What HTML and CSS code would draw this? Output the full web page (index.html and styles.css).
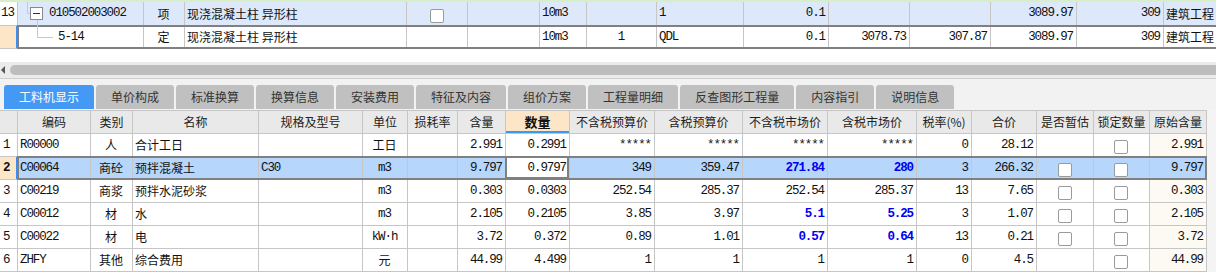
FILE: index.html
```html
<!DOCTYPE html>
<html lang="zh">
<head>
<meta charset="utf-8">
<title>工料机显示</title>
<link rel="stylesheet" href="styles.css">
</head>
<body>
<div class="top">
  <svg class="tree" width="60" height="48" viewBox="0 0 60 48">
    <path d="M27.5 0 V13.5 H30" fill="none" stroke="#f5c26e" stroke-width="1"/>
    <path d="M37.5 20 V37.5 H53" fill="none" stroke="#f5c26e" stroke-width="1"/>
    <rect x="30.5" y="7.5" width="12" height="12" fill="#fff" stroke="#8a8a8a" stroke-width="1"/>
    <path d="M33 13.5 H40" stroke="#333" stroke-width="1"/>
  </svg>
  <div class="tgrid" role="grid">
    <div class="row parent" role="row">
      <div class="cell rn plain n">13</div>
      <div class="cell n code1">010502003002</div>
      <div class="cell c">项</div>
      <div class="cell">现浇混凝土柱 异形柱</div>
      <div class="cell c"><span class="cb"></span></div>
      <div class="cell"></div>
      <div class="cell n">10m3</div>
      <div class="cell"></div>
      <div class="cell n">1</div>
      <div class="cell n r">0.1</div>
      <div class="cell"></div>
      <div class="cell"></div>
      <div class="cell n r">3089.97</div>
      <div class="cell n r">309</div>
      <div class="cell last">建筑工程</div>
    </div>
    <div class="row sel" role="row">
      <div class="cell rn cur"></div>
      <div class="cell n code2">5-14</div>
      <div class="cell c">定</div>
      <div class="cell">现浇混凝土柱 异形柱</div>
      <div class="cell"></div>
      <div class="cell"></div>
      <div class="cell n">10m3</div>
      <div class="cell n c">1</div>
      <div class="cell n">QDL</div>
      <div class="cell n r">0.1</div>
      <div class="cell n r">3078.73</div>
      <div class="cell n r">307.87</div>
      <div class="cell n r">3089.97</div>
      <div class="cell n r">309</div>
      <div class="cell last">建筑工程</div>
    </div>
  </div>
</div>

<div class="hscroll">
  <span class="arrow"></span>
  <span class="thumb"></span>
</div>

<div class="tabs">
  <span class="tab active">工料机显示</span>
  <span class="tab">单价构成</span>
  <span class="tab">标准换算</span>
  <span class="tab">换算信息</span>
  <span class="tab">安装费用</span>
  <span class="tab">特征及内容</span>
  <span class="tab">组价方案</span>
  <span class="tab">工程量明细</span>
  <span class="tab">反查图形工程量</span>
  <span class="tab">内容指引</span>
  <span class="tab">说明信息</span>
</div>

<div class="lower">
  <div class="lgrid" role="grid">
    <div class="row head" role="row">
      <div class="cell"></div><div class="cell">编码</div><div class="cell">类别</div><div class="cell">名称</div><div class="cell">规格及型号</div><div class="cell">单位</div><div class="cell">损耗率</div><div class="cell">含量</div><div class="cell hl">数量</div><div class="cell">不含税预算价</div><div class="cell">含税预算价</div><div class="cell">不含税市场价</div><div class="cell">含税市场价</div><div class="cell">税率(%)</div><div class="cell">合价</div><div class="cell">是否暂估</div><div class="cell">锁定数量</div><div class="cell">原始含量</div>
    </div>
    <div class="row" role="row">
      <div class="cell rn n">1</div><div class="cell n">R00000</div><div class="cell c">人</div><div class="cell">合计工日</div><div class="cell"></div><div class="cell c">工日</div><div class="cell"></div>
      <div class="cell n r">2.991</div><div class="cell n r">0.2991</div><div class="cell n r">*****</div><div class="cell n r">*****</div><div class="cell n r">*****</div><div class="cell n r">*****</div><div class="cell n r">0</div><div class="cell n r">28.12</div>
      <div class="cell"></div><div class="cell c"><span class="cb"></span></div><div class="cell n r orig">2.991</div>
    </div>
    <div class="row sel" role="row">
      <div class="cell rn n cur">2</div><div class="cell n">C00064</div><div class="cell c">商砼</div><div class="cell">预拌混凝土</div><div class="cell n">C30</div><div class="cell n c">m3</div><div class="cell"></div>
      <div class="cell n r">9.797</div><div class="cell n r edit">0.9797</div><div class="cell n r">349</div><div class="cell n r">359.47</div><div class="cell n r blue">271.84</div><div class="cell n r blue">280</div><div class="cell n r">3</div><div class="cell n r">266.32</div>
      <div class="cell c"><span class="cb"></span></div><div class="cell c"><span class="cb"></span></div><div class="cell n r orig">9.797</div>
    </div>
    <div class="row" role="row">
      <div class="cell rn n">3</div><div class="cell n">C00219</div><div class="cell c">商浆</div><div class="cell">预拌水泥砂浆</div><div class="cell"></div><div class="cell n c">m3</div><div class="cell"></div>
      <div class="cell n r">0.303</div><div class="cell n r">0.0303</div><div class="cell n r">252.54</div><div class="cell n r">285.37</div><div class="cell n r">252.54</div><div class="cell n r">285.37</div><div class="cell n r">13</div><div class="cell n r">7.65</div>
      <div class="cell c"><span class="cb"></span></div><div class="cell c"><span class="cb"></span></div><div class="cell n r orig">0.303</div>
    </div>
    <div class="row" role="row">
      <div class="cell rn n">4</div><div class="cell n">C00012</div><div class="cell c">材</div><div class="cell">水</div><div class="cell"></div><div class="cell n c">m3</div><div class="cell"></div>
      <div class="cell n r">2.105</div><div class="cell n r">0.2105</div><div class="cell n r">3.85</div><div class="cell n r">3.97</div><div class="cell n r blue">5.1</div><div class="cell n r blue">5.25</div><div class="cell n r">3</div><div class="cell n r">1.07</div>
      <div class="cell c"><span class="cb"></span></div><div class="cell c"><span class="cb"></span></div><div class="cell n r orig">2.105</div>
    </div>
    <div class="row" role="row">
      <div class="cell rn n">5</div><div class="cell n">C00022</div><div class="cell c">材</div><div class="cell">电</div><div class="cell"></div><div class="cell n c">kW·h</div><div class="cell"></div>
      <div class="cell n r">3.72</div><div class="cell n r">0.372</div><div class="cell n r">0.89</div><div class="cell n r">1.01</div><div class="cell n r blue">0.57</div><div class="cell n r blue">0.64</div><div class="cell n r">13</div><div class="cell n r">0.21</div>
      <div class="cell c"><span class="cb"></span></div><div class="cell c"><span class="cb"></span></div><div class="cell n r orig">3.72</div>
    </div>
    <div class="row" role="row">
      <div class="cell rn n">6</div><div class="cell n">ZHFY</div><div class="cell c">其他</div><div class="cell">综合费用</div><div class="cell"></div><div class="cell c">元</div><div class="cell"></div>
      <div class="cell n r">44.99</div><div class="cell n r">4.499</div><div class="cell n r">1</div><div class="cell n r">1</div><div class="cell n r">1</div><div class="cell n r">1</div><div class="cell n r">0</div><div class="cell n r">4.5</div>
      <div class="cell"></div><div class="cell c"><span class="cb"></span></div><div class="cell n r orig">44.99</div>
    </div>
  </div>
</div>
</body>
</html>
```

FILE: styles.css
```css
html, body {
  margin: 0;
  padding: 0;
}
body {
  width: 1216px;
  height: 272px;
  overflow: hidden;
  background: #f2f2f2;
  font-family: "Noto Sans CJK SC", "Noto Sans", sans-serif;
  font-size: 12px;
  color: #111;
}

/* ---------- shared grid rows ---------- */
.row {
  display: grid;
  position: relative;
  height: 23px;
}
.cell {
  box-sizing: border-box;
  border-right: 1px solid #c6c6c6;
  border-bottom: 1px solid #c6c6c6;
  padding: 0 3px 0 2px;
  line-height: 22px;
  white-space: nowrap;
  overflow: hidden;
}
.n {
  font-family: "Liberation Mono", "DejaVu Sans Mono", monospace;
  font-size: 12.5px;
  letter-spacing: -1.1px;
}
.c {
  text-align: center;
}
.r {
  text-align: right;
}
.blue {
  color: #0000f0;
  font-weight: bold;
}
.rn {
  padding: 0 0 0 3px;
  text-align: left;
}
.rn.cur {
  background: #fde6c8 !important;
  box-shadow: inset -1px 0 0 #3d8ef2;
  font-weight: bold;
}
.sel::after {
  content: "";
  position: absolute;
  left: 17px;
  right: 0;
  top: -1px;
  bottom: 0;
  border: 2px solid #808080;
  pointer-events: none;
}
.cb {
  display: inline-block;
  width: 12px;
  height: 12px;
  border: 1px solid #9a9a9a;
  border-radius: 2px;
  background: #fff;
  vertical-align: middle;
}

/* ---------- top grid ---------- */
.top {
  position: relative;
  background: #fff;
  border-top: 2px solid #d7efc9;
  height: 60px;
  overflow: hidden;
}
.tree {
  position: absolute;
  left: 0;
  top: -2px;
  z-index: 2;
}
.tgrid {
  width: 1243px;
}
.tgrid .row {
  grid-template-columns: 18px 126px 41px 222px 61px 72px 47px 70px 87px 85px 81px 81px 86px 87px 80px;
}
.tgrid .row.parent {
  height: 24px;
}
.tgrid .parent .cell {
  background: #dde8fb;
  line-height: 23px;
}
.tgrid .parent .cell.plain {
  background: #fff;
  font-family: "Liberation Mono", monospace;
  padding-left: 1px;
}
.tgrid .sel .cell {
  background: #fff;
}
.tgrid .sel::after {
  right: -2px;
}
.tgrid .cell.last {
  padding-left: 2px;
}
.code1 {
  padding-left: 31px;
}
.code2 {
  padding-left: 40px;
}

/* ---------- scrollbar ---------- */
.hscroll {
  display: flex;
  align-items: center;
  height: 16px;
  background: #ebebeb;
  border-bottom: 1px solid #cfcfcf;
}
.arrow {
  width: 0;
  height: 0;
  margin-left: 1px;
  border-top: 4px solid transparent;
  border-bottom: 4px solid transparent;
  border-right: 4px solid #555;
}
.thumb {
  flex: 1;
  height: 10px;
  margin-left: 5px;
  background: #bdbdbd;
  border-radius: 5px 0 0 5px;
}

/* ---------- tabs ---------- */
.tabs {
  display: flex;
  gap: 2px;
  padding: 6px 0 1px 4px;
  background: #f2f2f2;
}
.tab {
  height: 24px;
  line-height: 24px;
  padding: 0 15px;
  background: #c0c0c0;
  color: #333;
  border-radius: 3px 3px 0 0;
  white-space: nowrap;
}
.tab.active {
  background: #4499f4;
  color: #fff;
}

/* ---------- lower grid ---------- */
.lower {
  background: #f4f4f4;
}
.lgrid {
  width: 1207px;
  background: #fff;
  border-top: 1px solid #c6c6c6;
}
.lgrid .row {
  grid-template-columns: 18px 73px 42px 126px 104px 45px 50px 48px 64px 85px 88px 85px 89px 55px 65px 57px 56px 57px;
}
.lgrid .head .cell {
  background: #e9e9e9;
  color: #222;
  text-align: center;
  padding: 0;
}
.lgrid .head .cell.hl {
  background: #fde6c8;
  font-weight: bold;
  font-size: 13px;
  color: #111;
  box-shadow: inset 0 -2px 0 #3d97f5;
}
.lgrid .cell.orig {
  background: #fdfaf4;
}
.lgrid .sel .cell {
  background: #b6d6fc;
}
.lgrid .sel .cell.edit {
  background: #fff;
  position: relative;
  overflow: visible;
}
.lgrid .sel .cell.edit::after {
  content: "";
  position: absolute;
  left: -1px;
  right: 0;
  top: -1px;
  bottom: 0;
  border: 2px solid #808080;
}
```
